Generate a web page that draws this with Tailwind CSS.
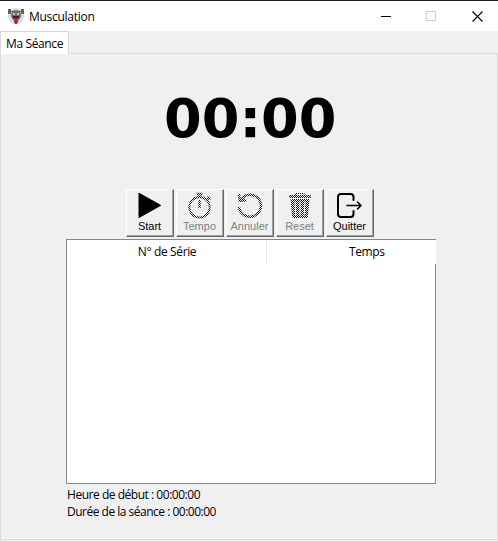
<!DOCTYPE html>
<html lang="fr"><head><meta charset="utf-8"><title>Musculation</title>
<script src="https://cdn.jsdelivr.net/npm/@tailwindcss/browser@4"></script></head>
<body class="w-[498px] h-[541px] overflow-hidden bg-[#f0f0f0] text-black text-[12px] leading-[17px] font-['Open_Sans','Noto_Sans',sans-serif]">
<svg class="absolute h-0 w-0"><defs><pattern id="dither" width="2" height="2" patternUnits="userSpaceOnUse"><path d="M0 0h1v1H0zM1 1h1v1H1z" fill="#111" shape-rendering="crispEdges"/></pattern></defs></svg>
<div class="flex h-full flex-col">
<header class="flex h-[31px] shrink-0 items-center border-t border-[#20202a] bg-white pl-[8px]">
<svg class="w-[16px] h-[16px]" viewBox="0 0 16 16"><circle cx="8" cy="8" r="8" fill="#d9d9e2"/><path d="M0 1h3v5H0zM13 1h3v5h-3zM3 3h10v1H3z" fill="#62625e"/><path d="M4 3l4-1 4 1 1 5-2 4H5L3 8z" fill="#6e6965"/><path d="M5 5h2v2H5zM9 5h2v2H9z" fill="#c9c7c0"/><path d="M5 8h6v2H5z" fill="#292725"/><path d="M6 10h4v4l-1 2H7l-1-2z" fill="#bd2836"/></svg>
<h1 class="ml-[5px] whitespace-nowrap tracking-[-0.28px]">Musculation</h1>
<div class="ml-auto mr-[15px] flex items-center">
<svg class="w-[11px] h-[11px]" viewBox="0 0 11 11"><path d="M0 5h10v1H0z"/></svg>
<svg class="ml-[34px] w-[10px] h-[10px]" viewBox="0 0 10 10"><path d="M.5.5h9v9h-9z" fill="none" stroke="#ccc"/></svg>
<svg class="ml-[36px] w-[11px] h-[11px]" viewBox="0 0 11 11"><path d="M.5.5l10 10M10.500.5l-10 10" fill="none" stroke="#000" stroke-width="1.1"/></svg>
</div></header>
<nav class="flex h-[22px] shrink-0"><div class="relative z-10 mb-[-1px] w-[69px] border border-b-0 border-[#d9d9d9] bg-white pl-[5px] pt-[3px] whitespace-nowrap tracking-[-0.38px]">Ma Séance</div></nav>
<main class="flex h-[487px] shrink-0 flex-col border border-[#dcdcdc] shadow-[inset_0_-1px_0_#fff]">
<div class="mt-[33px] h-[64px] pl-[163px] font-['DejaVu_Sans'] text-[54.2px] font-bold leading-[64px]">00:00</div>
<div class="mt-[38px] ml-[125px] flex gap-[2px] font-['Liberation_Sans'] text-[11px] leading-[13px]">
<button class="flex h-[48px] w-[48px] flex-col items-center border border-t-white border-l-white border-r-[#696969] border-b-[#696969] shadow-[inset_-1px_-1px_0_#a0a0a0] pt-[2px]"><svg class="w-[30px] h-[28px] shrink-0" viewBox="0 0 30 28"><path d="M3.500 1.500q0-1 1-.5l21 11.700q1 .8 0 1.400l-21 11.700q-1 .5-1-.5z"/></svg><span class="mr-[1px]">Start</span></button>
<button class="flex h-[48px] w-[48px] flex-col items-center border border-t-white border-l-white border-r-[#696969] border-b-[#696969] shadow-[inset_-1px_-1px_0_#a0a0a0] pt-[2px] text-[#808080]"><svg class="w-[30px] h-[28px] shrink-0" viewBox="0 0 30 28" fill="none" stroke="url(#dither)" stroke-width="2"><circle cx="14.500" cy="15.300" r="10.200"/><path d="M11.500 2h6.010M14.500 2.500L14.510 5M22.500 4.500l3 3M24 6l-2 2M14.500 8l.01 8" stroke-width="2.400"/></svg><span class="mr-[1px]">Tempo</span></button>
<button class="flex h-[48px] w-[48px] flex-col items-center border border-t-white border-l-white border-r-[#696969] border-b-[#696969] shadow-[inset_-1px_-1px_0_#a0a0a0] pt-[2px] text-[#808080]"><svg class="w-[30px] h-[28px] shrink-0" viewBox="0 0 30 28" fill="none" stroke="url(#dither)" stroke-width="2.500"><path d="M4 15A11 11 0 1 0 10 3.900L5 8.500M4 2l.8 6.800 6.500-.6"/></svg><span class="mr-[1px]">Annuler</span></button>
<button class="flex h-[48px] w-[48px] flex-col items-center border border-t-white border-l-white border-r-[#696969] border-b-[#696969] shadow-[inset_-1px_-1px_0_#a0a0a0] pt-[2px] text-[#808080]"><svg class="w-[30px] h-[28px] shrink-0" viewBox="0 0 30 28" fill="url(#dither)"><path d="M4 4q0-1 1-1h4l2-2h8l2 2h4q1 0 1 1v2H4zM11 3h8l-1-1h-6zM5.500 7h19L23 24q0 2-2 2H9q-2 0-2-2zM9.500 9.500l.8 14h1l-.8-14zM14.500 9.500v14h1v-14zM19.500 9.500l-.8 14h1l.8-14z" fill-rule="evenodd"/></svg><span class="mr-[1px]">Reset</span></button>
<button class="flex h-[48px] w-[48px] flex-col items-center border border-t-white border-l-white border-r-[#696969] border-b-[#696969] shadow-[inset_-1px_-1px_0_#a0a0a0] pt-[2px]"><svg class="w-[30px] h-[28px] shrink-0" viewBox="0 0 30 28" fill="none" stroke="#000" stroke-width="2" stroke-linecap="round" stroke-linejoin="round"><path d="M18.500 8V5q0-3-3-3H6Q3 2 3 5v17q0 3 3 3h9.500q3 0 3-3v-3"/><path d="M12 13.500h14M22.500 10l3.500 3.500-3.500 3.500" stroke-width="1.600"/></svg><span class="mr-[1px]">Quitter</span></button>
</div>
<section class="mt-[2px] ml-[65px] h-[245px] w-[370px] shrink-0 border border-[#828790] bg-white">
<div class="mr-[-1px] flex h-[24px] bg-white leading-[24px] whitespace-nowrap">
<div class="w-[200px] shrink-0 border-r border-[#e5e5e5] pl-px text-center tracking-[-0.36px]">N° de Série</div>
<div class="w-[169px] overflow-hidden pl-[82px] tracking-[-0.4px]">Temps</div>
</div></section>
<div class="mt-[2px] ml-[66px] whitespace-nowrap">
<p class="tracking-[-0.47px]">Heure de début : 00:00:00</p>
<p class="tracking-[-0.5px]">Durée de la séance : 00:00:00</p>
</div>
</main></div></body></html>
